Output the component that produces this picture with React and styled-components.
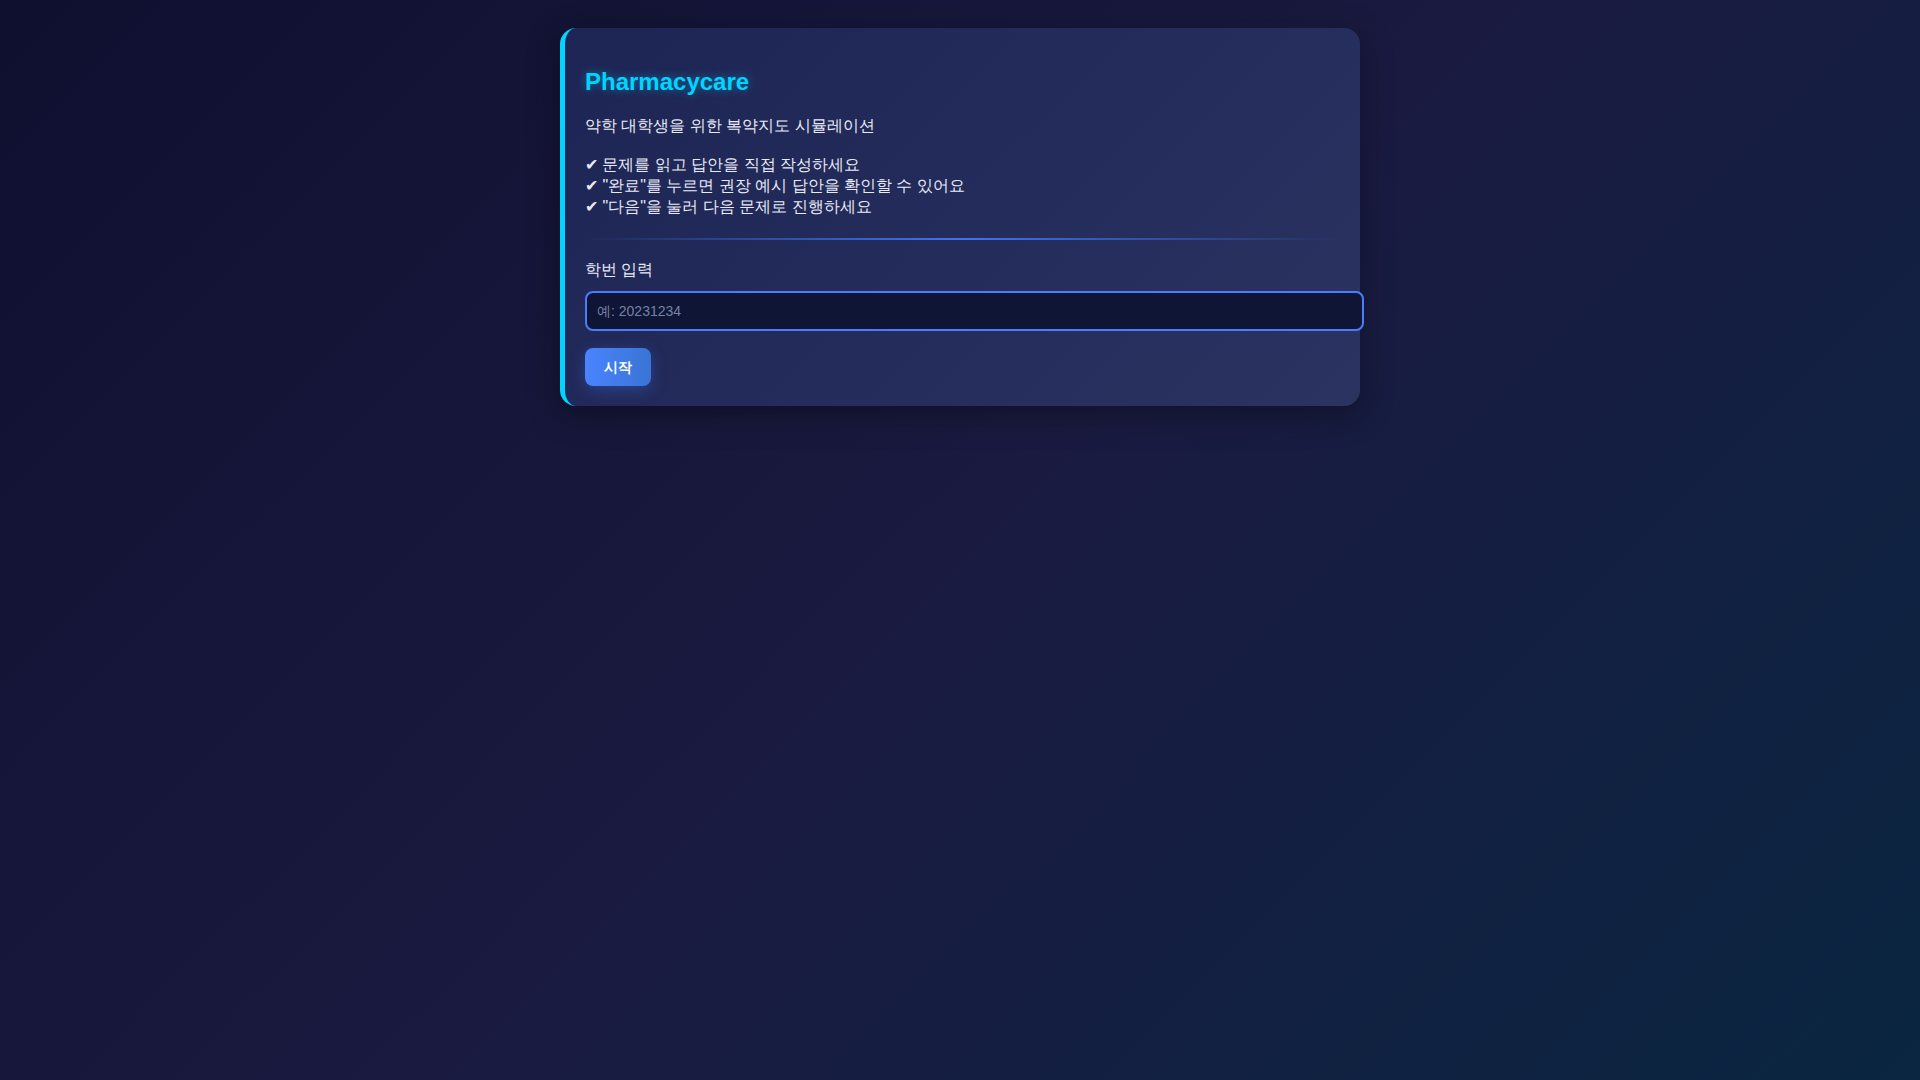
import { useState } from 'react'
import styled, { createGlobalStyle } from 'styled-components'

const GlobalStyle = createGlobalStyle`
  html, body {
    margin: 0;
    padding: 0;
    min-height: 100%;
  }
  body {
    min-height: 100vh;
    font-family: 'Liberation Sans', Arial, sans-serif;
    background: linear-gradient(135deg, #0f1030 0%, #1a1a40 50%, #0a2641 100%);
    background-attachment: fixed;
    color: #e8ebf7;
  }
`

const Page = styled.div`
  padding: 28px 20px;
`

const Card = styled.div`
  box-sizing: border-box;
  width: 800px;
  margin: 0 auto;
  padding: 20px;
  border-left: 5px solid #00d4ff;
  border-radius: 16px;
  background: linear-gradient(135deg, #1d2554 0%, #252d5c 60%, #2b3361 100%);
  box-shadow: 0 8px 32px rgba(0, 0, 0, 0.35);
`

const Title = styled.h2`
  margin: 20px 0 19px;
  font-size: 24px;
  font-weight: bold;
  color: #00d4ff;
  text-shadow: 0 0 10px rgba(0, 212, 255, 0.45);
  line-height: 1.15;
`

const Subtitle = styled.p`
  margin: 0 0 18px;
  font-size: 16px;
  line-height: 21px;
`

const Checklist = styled.div`
  font-size: 16px;
  line-height: 21px;
`

const Divider = styled.div`
  height: 2px;
  margin: 21px 0 19px;
  background: linear-gradient(90deg, transparent, #3f73f0 50%, transparent);
`

const Label = styled.label`
  display: block;
  margin-bottom: 11px;
  font-size: 16px;
  line-height: 21px;
`

const Input = styled.input`
  display: block;
  width: 100%;
  padding: 10px;
  border: 2px solid #4a7cff;
  border-radius: 8px;
  background: #0f1535;
  color: #e6e9f5;
  font-family: inherit;
  font-size: 14px;
  line-height: 14px;
  outline: none;

  &::placeholder {
    color: #7780a6;
  }
`

const StartButton = styled.button`
  margin-top: 17px;
  padding: 10px 19px;
  border: none;
  border-radius: 8px;
  background: linear-gradient(90deg, #4a84ff, #3a74d4);
  color: #fff;
  font-family: inherit;
  font-size: 14px;
  font-weight: bold;
  line-height: 18px;
  cursor: pointer;
  box-shadow: 0 4px 15px rgba(74, 124, 255, 0.3);
`

const checks = [
  '문제를 읽고 답안을 직접 작성하세요',
  '"완료"를 누르면 권장 예시 답안을 확인할 수 있어요',
  '"다음"을 눌러 다음 문제로 진행하세요',
]

function App() {
  const [studentId, setStudentId] = useState('')

  return (
    <Page>
      <GlobalStyle />
      <Card>
        <Title>Pharmacycare</Title>
        <Subtitle>약학 대학생을 위한 복약지도 시뮬레이션</Subtitle>
        <Checklist>
          {checks.map((c) => (
            <div key={c}>✔ {c}</div>
          ))}
        </Checklist>
        <Divider />
        <Label htmlFor='sid'>학번 입력</Label>
        <Input
          id='sid'
          placeholder='예: 20231234'
          value={studentId}
          onChange={(e) => setStudentId(e.target.value)}
        />
        <StartButton>시작</StartButton>
      </Card>
    </Page>
  )
}

export default App
